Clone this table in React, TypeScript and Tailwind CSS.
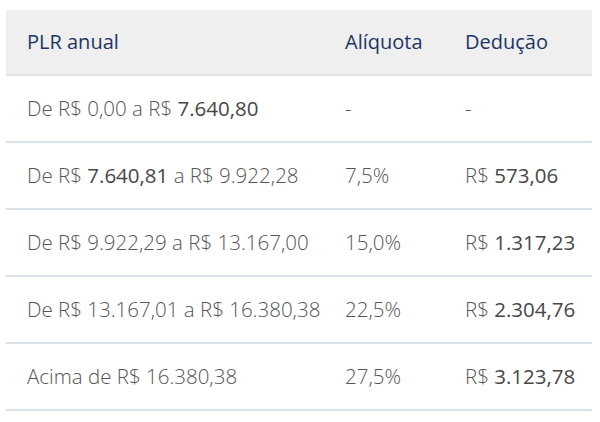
const rows: { range: React.ReactNode; rate: string; ded: React.ReactNode }[] = [
  {
    range: (
      <>
        De R$ 0,00 a R$ <b className="font-medium text-[#474747]">7.640,80</b>
      </>
    ),
    rate: '-',
    ded: '-',
  },
  {
    range: (
      <>
        De R$ <b className="font-medium text-[#474747]">7.640,81</b> a R$ 9.922,28
      </>
    ),
    rate: '7,5%',
    ded: (
      <>
        R$ <b className="font-medium text-[#474747]">573,06</b>
      </>
    ),
  },
  {
    range: 'De R$ 9.922,29 a R$ 13.167,00',
    rate: '15,0%',
    ded: (
      <>
        R$ <b className="font-medium text-[#474747]">1.317,23</b>
      </>
    ),
  },
  {
    range: 'De R$ 13.167,01 a R$ 16.380,38',
    rate: '22,5%',
    ded: (
      <>
        R$ <b className="font-medium text-[#474747]">2.304,76</b>
      </>
    ),
  },
  {
    range: 'Acima de R$ 16.380,38',
    rate: '27,5%',
    ded: (
      <>
        R$ <b className="font-medium text-[#474747]">3.123,78</b>
      </>
    ),
  },
];

export default function App() {
  return (
    <div className="w-[600px] h-[422px] bg-white pt-[10px] pl-[6px] font-['Open_Sans','Lato',sans-serif]">
      <table className="w-[586px] border-collapse">
        <thead>
          <tr className="bg-[#efefef] border-b-2 border-[#dfe3e8] h-[65px] text-[#1c3664] text-[20px]">
            <th className="w-[318px] pl-[21px] text-left font-medium">PLR anual</th>
            <th className="w-[120px] pl-[21px] text-left font-medium">Alíquota</th>
            <th className="pl-[21px] text-left font-medium">Dedução</th>
          </tr>
        </thead>
        <tbody className="text-[#555555] font-light text-[20.5px]">
          {rows.map((r, i) => (
            <tr key={i} className="h-[67px] border-b-2 border-[#dbe2e9]">
              <td className="pl-[21px] whitespace-nowrap">{r.range}</td>
              <td className="pl-[21px]">{r.rate}</td>
              <td className="pl-[21px] whitespace-nowrap">{r.ded}</td>
            </tr>
          ))}
        </tbody>
      </table>
    </div>
  );
}
